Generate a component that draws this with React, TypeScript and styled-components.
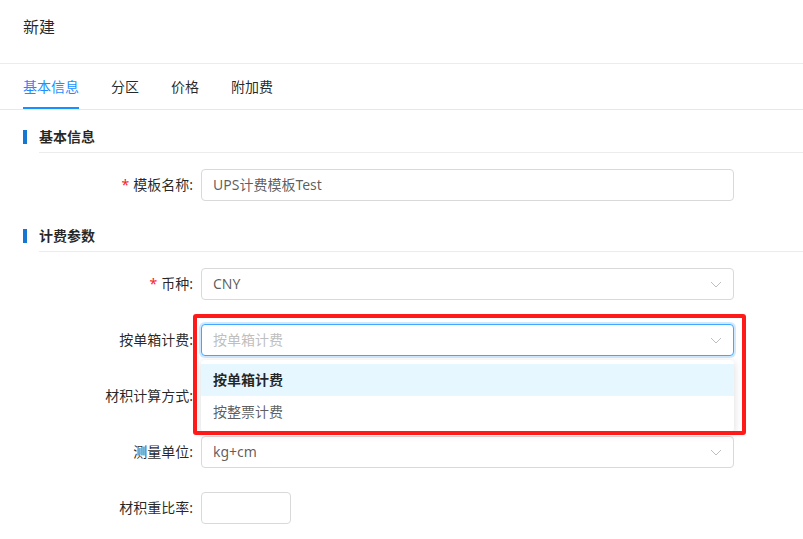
import React from 'react';
import styled, { createGlobalStyle } from 'styled-components';

const GlobalStyle = createGlobalStyle`
  * { box-sizing: border-box; }
  body {
    margin: 0;
    background: #fff;
    font-family: "Noto Sans", "Noto Sans CJK SC", sans-serif;
    font-size: 14px;
    color: rgba(0, 0, 0, 0.65);
  }
`;

const Page = styled.div`
  width: 803px;
  height: 539px;
  overflow: hidden;
`;

const Header = styled.div`
  height: 64px;
  padding: 16px 23px 0;
  font-size: 16px;
  line-height: 22px;
  color: rgba(0, 0, 0, 0.85);
  border-bottom: 1px solid #ececec;
`;

const TabBar = styled.div`
  display: flex;
  gap: 32px;
  height: 46px;
  padding: 0 23px;
  border-bottom: 1px solid #e8e8e8;
`;

const Tab = styled.div<{ $active?: boolean }>`
  position: relative;
  padding: 12px 0;
  line-height: 21px;
  color: ${(p) => (p.$active ? '#1890ff' : 'rgba(0, 0, 0, 0.85)')};

  &::after {
    content: '';
    display: ${(p) => (p.$active ? 'block' : 'none')};
    position: absolute;
    left: 0;
    right: 0;
    bottom: 0;
    height: 2px;
    background: #1890ff;
  }
`;

const Body = styled.div`
  padding-left: 23px;
`;

const SectionHead = styled.div`
  display: flex;
  align-items: flex-start;
  margin-top: 16px;
`;

const Bar = styled.div`
  width: 4px;
  height: 14px;
  margin: 4px 12px 0 0;
  background: #1677d2;
`;

const SectionTitle = styled.div`
  flex: 1;
  padding-bottom: 4px;
  line-height: 22px;
  font-weight: 700;
  color: rgba(0, 0, 0, 0.85);
  border-bottom: 1px solid #ececec;
`;

const Rows = styled.div`
  display: flex;
  flex-direction: column;
  gap: 24px;
  margin: 16px 0 24px;
`;

const Row = styled.div`
  display: flex;
  align-items: center;
`;

const Label = styled.label`
  width: 178px;
  padding-right: 8px;
  text-align: right;
  line-height: 22px;
  color: rgba(0, 0, 0, 0.85);
`;

const Star = styled.span`
  margin-right: 4px;
  color: #f5222d;
`;

const Field = styled.div<{ $width?: number }>`
  position: relative;
  width: ${(p) => p.$width ?? 533}px;
`;

const Box = styled.div<{ $focused?: boolean }>`
  display: flex;
  align-items: center;
  justify-content: space-between;
  height: 32px;
  padding: 0 11px;
  border: 1px solid ${(p) => (p.$focused ? '#40a9ff' : '#d9d9d9')};
  border-radius: 4px;
  background: #fff;
  box-shadow: ${(p) => (p.$focused ? '0 0 0 2px rgba(24, 144, 255, 0.2)' : 'none')};
  line-height: 22px;
`;

const Value = styled.span<{ $placeholder?: boolean }>`
  color: ${(p) => (p.$placeholder ? '#bfbfbf' : 'rgba(0, 0, 0, 0.65)')};
`;

const Menu = styled.div`
  position: absolute;
  top: 36px;
  left: 0;
  right: 0;
  z-index: 2;
  padding: 4px 0;
  background: #fff;
  border-radius: 4px;
  box-shadow: 0 2px 8px rgba(0, 0, 0, 0.15);
`;

const Option = styled.div<{ $selected?: boolean }>`
  height: 32px;
  padding: 5px 12px;
  line-height: 22px;
  font-weight: ${(p) => (p.$selected ? 700 : 400)};
  color: rgba(0, 0, 0, ${(p) => (p.$selected ? 0.85 : 0.65)});
  background: ${(p) => (p.$selected ? '#e6f7ff' : '#fff')};
`;

const Highlight = styled.div`
  position: absolute;
  left: -8px;
  top: -10px;
  width: 553px;
  height: 121px;
  z-index: 3;
  border: 4px solid #ff1a1a;
  border-radius: 3px;
  pointer-events: none;
`;

const Chevron = () => (
  <svg width="12" height="12" viewBox="0 0 12 12" fill="none">
    <polyline points="1,4 6,9 11,4" stroke="rgba(0,0,0,0.25)" strokeWidth="1" />
  </svg>
);

type SelectProps = { value?: string; placeholder?: string; focused?: boolean };

const Select: React.FC<SelectProps> = ({ value, placeholder, focused }) => (
  <Box $focused={focused}>
    <Value $placeholder={!value}>{value || placeholder || ''}</Value>
    <Chevron />
  </Box>
);

const App: React.FC = () => {
  return (
    <Page>
      <GlobalStyle />
      <Header>新建</Header>
      <TabBar>
        <Tab $active>基本信息</Tab>
        <Tab>分区</Tab>
        <Tab>价格</Tab>
        <Tab>附加费</Tab>
      </TabBar>
      <Body>
        <SectionHead>
          <Bar />
          <SectionTitle>基本信息</SectionTitle>
        </SectionHead>
        <Rows>
          <Row>
            <Label>
              <Star>*</Star>模板名称:
            </Label>
            <Field>
              <Box>
                <Value>UPS计费模板Test</Value>
              </Box>
            </Field>
          </Row>
        </Rows>

        <SectionHead>
          <Bar />
          <SectionTitle>计费参数</SectionTitle>
        </SectionHead>
        <Rows>
          <Row>
            <Label>
              <Star>*</Star>币种:
            </Label>
            <Field>
              <Select value="CNY" />
            </Field>
          </Row>
          <Row>
            <Label>按单箱计费:</Label>
            <Field>
              <Select placeholder="按单箱计费" focused />
              <Menu>
                <Option $selected>按单箱计费</Option>
                <Option>按整票计费</Option>
              </Menu>
              <Highlight />
            </Field>
          </Row>
          <Row>
            <Label>材积计算方式:</Label>
            <Field>
              <Select />
            </Field>
          </Row>
          <Row>
            <Label>测量单位:</Label>
            <Field>
              <Select value="kg+cm" />
            </Field>
          </Row>
          <Row>
            <Label>材积重比率:</Label>
            <Field $width={90}>
              <Box />
            </Field>
          </Row>
        </Rows>
      </Body>
    </Page>
  );
};

export default App;
